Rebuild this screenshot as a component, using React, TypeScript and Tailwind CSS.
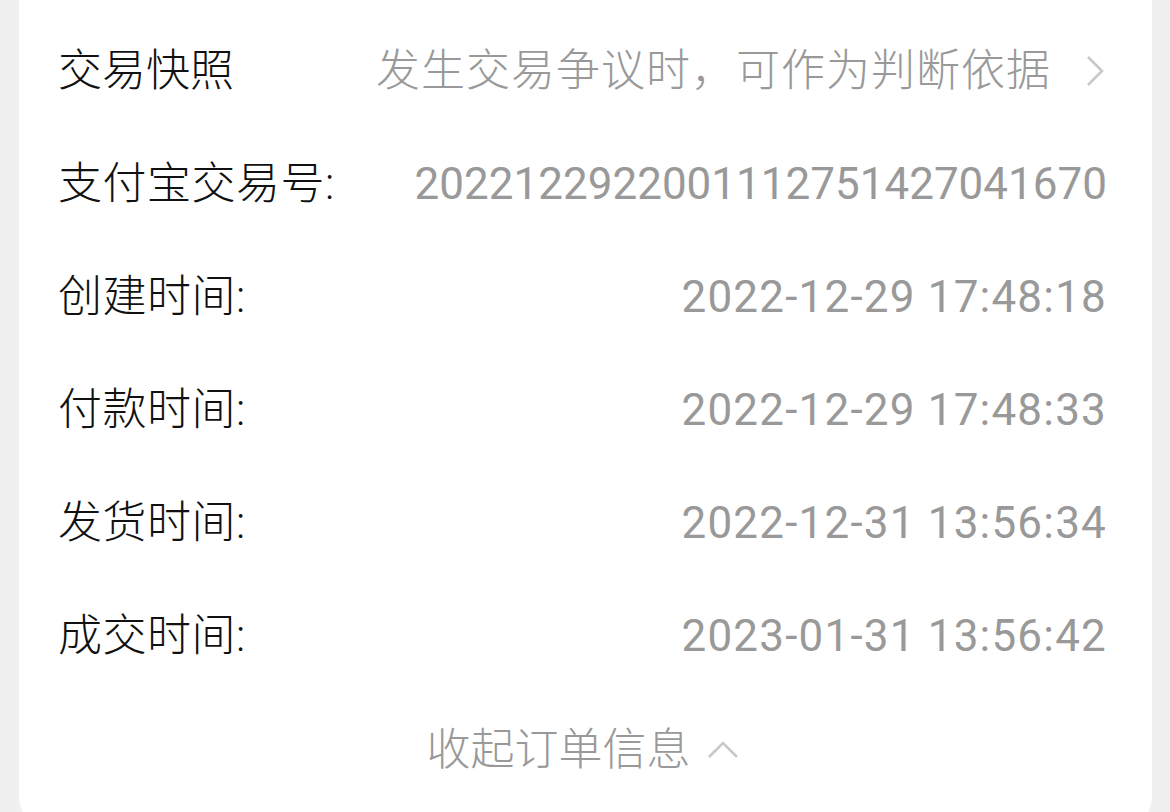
const font = { fontFamily: 'Roboto, "Noto Sans CJK SC", "Noto Sans", sans-serif' };

const rows = [
  { label: '支付宝交易号:', value: '2022122922001112751427041670', wide: false },
  { label: '创建时间:', value: '2022-12-29 17:48:18', wide: true },
  { label: '付款时间:', value: '2022-12-29 17:48:33', wide: true },
  { label: '发货时间:', value: '2022-12-31 13:56:34', wide: true },
  { label: '成交时间:', value: '2023-01-31 13:56:42', wide: true },
];

export default function App() {
  return (
    <div className="h-[812px] overflow-hidden bg-[#f0f0f0] pl-[19px] pr-[18px]" style={font}>
      <div className="h-[830px] rounded-b-[34px] bg-white pl-[39px] pr-[45px] pt-[14px]">
        <div className="flex h-[113px] items-center justify-between">
          <span className="text-[44px] font-light text-[#111]">交易快照</span>
          <div className="flex items-center">
            <span className="text-[44px] font-light tracking-[1px] text-[#999]">发生交易争议时，可作为判断依据</span>
            <svg width="20" height="32" viewBox="0 0 20 32" className="ml-[34px] mr-[2px]">
              <path d="M3 2 L17 16 L3 30" fill="none" stroke="#c8c8c8" strokeWidth="2.6" />
            </svg>
          </div>
        </div>
        {rows.map((r) => (
          <div key={r.label} className="flex h-[113px] items-center justify-between">
            <span className="text-[44px] font-light tracking-[0.5px] text-[#111]">{r.label}</span>
            <span className={r.wide ? 'text-[44px] tracking-[1.2px] text-[#999]' : 'text-[44px] text-[#999]'}>{r.value}</span>
          </div>
        ))}
        <div className="flex h-[116px] items-center justify-center">
          <span className="text-[44px] font-light text-[#999]">收起订单信息</span>
          <svg width="32" height="18" viewBox="0 0 32 18" className="ml-[16px]">
            <path d="M2 16 L16 2 L30 16" fill="none" stroke="#c8c8c8" strokeWidth="2.6" />
          </svg>
        </div>
      </div>
    </div>
  );
}
